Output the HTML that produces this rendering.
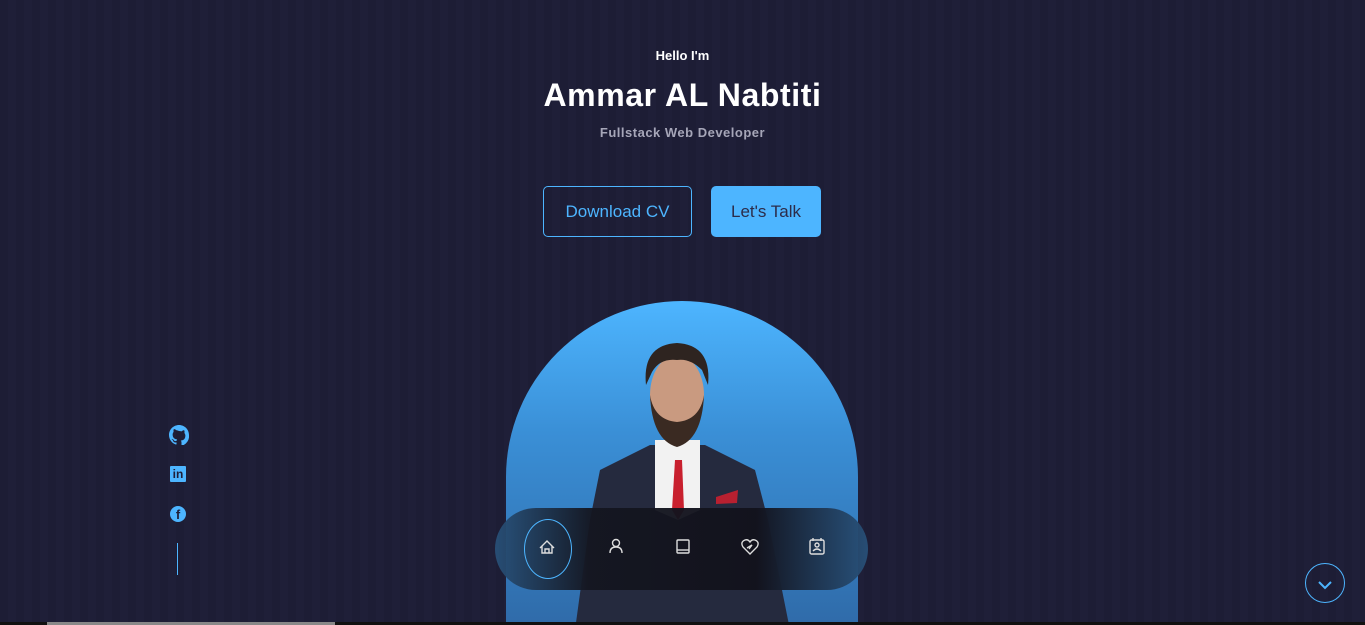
<!DOCTYPE html>
<html><head><meta charset="utf-8"><style>
*{margin:0;padding:0;box-sizing:border-box}
html,body{width:1365px;height:625px;overflow:hidden}
body{background:#1f1f38;font-family:"Liberation Sans",sans-serif;position:relative;
background-image:linear-gradient(90deg,rgba(0,0,0,0.06) 50%,transparent 50%);background-size:16px 16px}
.t{position:absolute;left:0;width:1365px;text-align:center;white-space:nowrap}
.btn{position:absolute;top:186px;height:51px;border-radius:5px;font-size:16px;display:flex;align-items:center;justify-content:center}
</style></head><body>
<div class="t" style="top:48px;font-size:13px;font-weight:bold;color:#fff">Hello I'm</div>
<div class="t" style="top:77px;font-size:32px;font-weight:bold;color:#fff;letter-spacing:0.6px">Ammar AL Nabtiti</div>
<div class="t" style="top:125px;font-size:13px;font-weight:bold;color:#a6a6b8;letter-spacing:0.5px">Fullstack Web Developer</div>
<div class="btn" style="left:543px;width:149px;border:1px solid #4db5ff;color:#4db5ff;font-size:17px">Download CV</div>
<div class="btn" style="left:711px;width:110px;background:#4db5ff;color:#2c2c4a;font-size:17px">Let's Talk</div>

<div style="position:absolute;left:506px;top:301px;width:352px;height:330px;border-radius:176px 176px 0 0;background:linear-gradient(#4db5ff,#3a8fd6 40%,#2f6aa8);overflow:hidden">
<svg width="352" height="330" viewBox="506 301 352 330" style="position:absolute;left:0;top:0">
<path d="M600 470 L650 445 L705 445 L755 470 L768 520 L790 630 L575 630 L590 520Z" fill="#252a3e"/>
<path d="M655 440 L700 440 L700 510 L678 520 L655 510Z" fill="#f2f2f2"/>
<path d="M675 460 L682 460 L684 510 L678 520 L672 510Z" fill="#c8202e"/>
<path d="M716 497 L738 490 L737 503 L716 504Z" fill="#b82030"/>
<ellipse cx="677" cy="395" rx="27" ry="40" fill="#c99a80"/>
<path d="M650 395 Q652 440 677 447 Q702 440 704 395 Q700 420 677 422 Q654 420 650 395Z" fill="#3a2a22"/>
<path d="M646 385 Q642 345 677 343 Q712 345 708 385 L702 370 Q690 358 677 360 Q660 358 652 372Z" fill="#2e2420"/>
</svg>
</div>

<div style="position:absolute;left:495px;top:508px;width:373px;height:82px;border-radius:41px;background:linear-gradient(90deg,rgba(40,80,120,0.95),rgba(20,22,32,0.95) 25%,rgba(18,18,28,0.97) 70%,rgba(40,80,120,0.95))"></div>
<div style="position:absolute;left:524px;top:519px;width:48px;height:60px;border:1.5px solid #4db5ff;border-radius:50%"></div>
<svg width="1365" height="625" style="position:absolute;left:0;top:0" fill="none" stroke="#ddd" stroke-width="1.4">
<path d="M540 548 L547 541 L554 548 M542 546 V553 H552 V546 M545 553 V549 H549 V553"/>
<circle cx="616" cy="543" r="3.5"/><path d="M610 553 Q610 547 616 547 Q622 547 622 553"/>
<rect x="677" y="540" width="12" height="13" rx="1"/><path d="M677 550 H689"/>
<path d="M750 554 L743 547 Q740 542 745 540 Q748 539 750 542 Q752 539 755 540 Q760 542 757 547Z M747 548 L752 545 L749 549"/>
<rect x="810" y="540" width="14" height="14" rx="1.5"/><circle cx="817" cy="545" r="2"/><path d="M813 551 Q817 547 821 551 M813 538 V541 M821 538 V541"/>
</svg>

<svg width="20" height="20" viewBox="0 0 16 16" style="position:absolute;left:169px;top:425px"><path fill="#4db5ff" d="M8 0C3.58 0 0 3.580 0 8c0 3.54 2.29 6.53 5.47 7.59.4.07.55-.17.55-.38v-1.330c-2.23.48-2.7-1.07-2.7-1.07-.36-.93-.89-1.17-.89-1.17-.73-.5.06-.49.06-.49.8.06 1.23.83 1.23.83.72 1.23 1.87.87 2.33.67.07-.52.28-.87.5-1.07-1.78-.2-3.64-.89-3.64-3.95 0-.87.31-1.59.82-2.15-.08-.2-.36-1.02.08-2.12 0 0 .67-.21 2.2.82A7.6 7.6 0 0 1 8 4.8c.68 0 1.36.09 2 .27 1.53-1.04 2.2-.82 2.2-.82.44 1.1.16 1.92.08 2.12.51.56.82 1.27.82 2.15 0 3.07-1.87 3.75-3.65 3.950.29.25.54.73.54 1.48v2.2c0 .21.15.46.55.38A8 8 0 0 0 16 8c0-4.42-3.58-8-8-8z"/></svg>
<div style="position:absolute;left:170px;top:466px;width:16px;height:16px;background:#4db5ff;border-radius:1px;color:#1f1f38;font-weight:bold;font-size:12px;line-height:16px;text-align:center">in</div>
<div style="position:absolute;left:170px;top:506px;width:16px;height:16px;background:#4db5ff;border-radius:50%;color:#1f1f38;font-weight:bold;font-size:13px;line-height:18px;text-align:center;overflow:hidden">f</div>
<div style="position:absolute;left:177px;top:543px;width:1px;height:32px;background:#4db5ff"></div>

<div style="position:absolute;left:1305px;top:563px;width:40px;height:40px;border:1.5px solid #4db5ff;border-radius:50%"></div>
<svg width="16" height="10" style="position:absolute;left:1317px;top:580px"><path d="M2 2 L8 8 L14 2" stroke="#4db5ff" stroke-width="2" fill="none"/></svg>

<div style="position:absolute;left:0;top:622px;width:1365px;height:3px;background:#111"></div>
<div style="position:absolute;left:47px;top:622px;width:288px;height:3px;background:#888"></div>
</body></html>
